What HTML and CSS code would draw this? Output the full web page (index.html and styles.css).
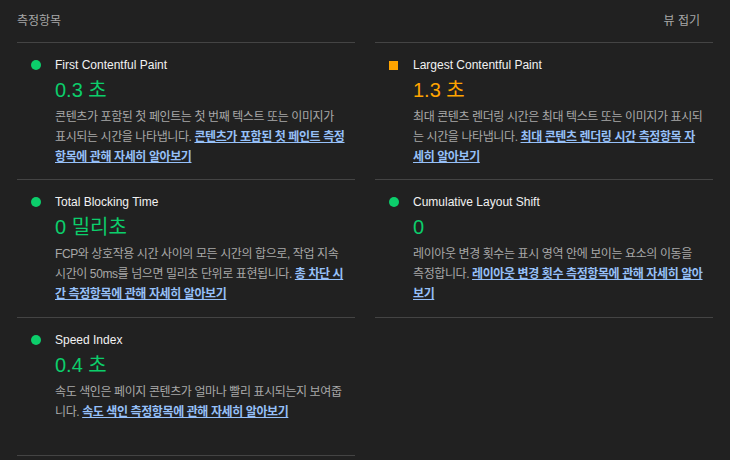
FILE: index.html
```html
<!DOCTYPE html>
<html lang="ko">
<head>
<meta charset="utf-8">
<title>측정항목</title>
<link rel="stylesheet" href="styles.css">
</head>
<body>
<section class="report">
  <div class="report-header">
    <span class="header-title">측정항목</span>
    <span class="header-toggle">뷰 접기</span>
  </div>
  <div class="metrics">
    <div class="metric">
      <span class="icon icon-pass"></span>
      <div class="metric-title">First Contentful Paint</div>
      <div class="metric-value value-pass">0.3 초</div>
      <div class="metric-desc">콘텐츠가 포함된 첫 페인트는 첫 번째 텍스트 또는 이미지가 표시되는 시간을 나타냅니다. <a href="#">콘텐츠가 포함된 첫 페인트 측정항목에 관해 자세히 알아보기</a></div>
    </div>
    <div class="metric">
      <span class="icon icon-average"></span>
      <div class="metric-title">Largest Contentful Paint</div>
      <div class="metric-value value-average">1.3 초</div>
      <div class="metric-desc">최대 콘텐츠 렌더링 시간은 최대 텍스트 또는 이미지가 표시되는 시간을 나타냅니다. <a href="#">최대 콘텐츠 렌더링 시간 측정항목 자세히 알아보기</a></div>
    </div>
    <div class="metric">
      <span class="icon icon-pass"></span>
      <div class="metric-title">Total Blocking Time</div>
      <div class="metric-value value-pass">0 밀리초</div>
      <div class="metric-desc">FCP와 상호작용 시간 사이의 모든 시간의 합으로, 작업 지속 시간이 50ms를 넘으면 밀리초 단위로 표현됩니다. <a href="#">총 차단 시간 측정항목에 관해 자세히 알아보기</a></div>
    </div>
    <div class="metric">
      <span class="icon icon-pass"></span>
      <div class="metric-title">Cumulative Layout Shift</div>
      <div class="metric-value value-pass">0</div>
      <div class="metric-desc">레이아웃 변경 횟수는 표시 영역 안에 보이는 요소의 이동을 측정합니다. <a href="#">레이아웃 변경 횟수 측정항목에 관해 자세히 알아보기</a></div>
    </div>
    <div class="metric">
      <span class="icon icon-pass"></span>
      <div class="metric-title">Speed Index</div>
      <div class="metric-value value-pass">0.4 초</div>
      <div class="metric-desc">속도 색인은 페이지 콘텐츠가 얼마나 빨리 표시되는지 보여줍니다. <a href="#">속도 색인 측정항목에 관해 자세히 알아보기</a></div>
    </div>
  </div>
</section>
</body>
</html>
```

FILE: styles.css
```css
html, body {
  margin: 0;
  background: #212121;
}

body {
  font-family: "Liberation Sans", "Noto Sans CJK KR", sans-serif;
  color: #e0e0e0;
}

.report {
  padding: 9px 17px 0;
}

.report-header {
  display: flex;
  justify-content: space-between;
  align-items: center;
  height: 20px;
  padding-right: 13px;
  margin-bottom: 13px;
  font-size: 12px;
  color: #a8a8a8;
}

.metrics {
  display: grid;
  grid-template-columns: 1fr 1fr;
  grid-auto-rows: 1fr;
  column-gap: 20px;
}

.metric {
  display: grid;
  grid-template-columns: 38px 1fr;
  align-content: start;
  padding: 12px 8px 12px 0;
  border-bottom: 1px solid #444444;
}

.metric:nth-child(1),
.metric:nth-child(2) {
  border-top: 1px solid #444444;
}

.icon {
  grid-column: 1;
  grid-row: 1;
  align-self: center;
  justify-self: start;
  margin-left: 14px;
}

.icon-pass {
  width: 10px;
  height: 10px;
  border-radius: 50%;
  background: #0cce6b;
}

.icon-average {
  width: 9px;
  height: 9px;
  background: #ffa400;
}

.metric-title {
  grid-column: 2;
  grid-row: 1;
  font-size: 12px;
  line-height: 20px;
  color: #f2f2f2;
}

.metric-value {
  grid-column: 2;
  font-size: 20px;
  line-height: 24px;
  margin: 3px 0 5px;
}

.value-pass { color: #0cce6b; }
.value-average { color: #ffa400; }

.metric-desc {
  grid-column: 2;
  font-size: 12px;
  line-height: 20px;
  letter-spacing: -0.4px;
  color: #a8a8a8;
}

.metric-desc a {
  color: #96c0f8;
  font-weight: 700;
  text-decoration: underline;
}
```
